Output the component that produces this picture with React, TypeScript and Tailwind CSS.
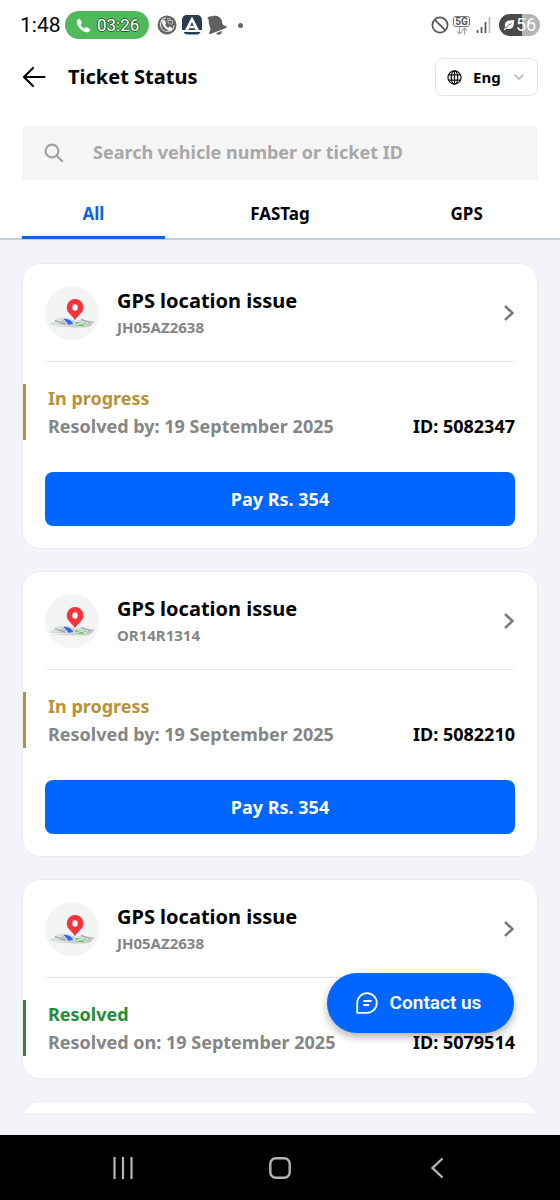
import { useState } from "react";

type Ticket = {
  id: string;
  title: string;
  vehicle: string;
  resolved: boolean;
  date: string;
  amount?: number;
};

const tickets: Ticket[] = [
  { id: "5082347", title: "GPS location issue", vehicle: "JH05AZ2638", resolved: false, date: "19 September 2025", amount: 354 },
  { id: "5082210", title: "GPS location issue", vehicle: "OR14R1314", resolved: false, date: "19 September 2025", amount: 354 },
  { id: "5079514", title: "GPS location issue", vehicle: "JH05AZ2638", resolved: true, date: "19 September 2025" },
];

const tabs = ["All", "FASTag", "GPS"];

function MapPin() {
  return (
    <svg viewBox="0 0 54 54" className="size-[54px] shrink-0" aria-hidden="true">
      <circle cx="27" cy="27" r="27" fill="#f4f4f4" />
      <path d="M6 40.500 40 42l8-3-20-1z" fill="#dcdcdc" />
      <path d="M5 38.500 13 32.500l9-.5 8 3 8-1 12 1.500-5 5-15 1-9-2.500z" fill="#c3c9cc" />
      <path d="M5 38.500 13 32.500l4 .5-2 4.500z" fill="#dfe2e3" />
      <path d="M10 34.500 20 38M36 33l9 4" stroke="#98a1a6" strokeWidth="1.200" />
      <path d="M17.500 32.500c5-.8 9.500 1.500 11.500 6l-6 .8c-1.500-3-3-4.500-5.500-6.800z" fill="#3b66dd" stroke="#eef2fa" strokeWidth=".8" />
      <path d="m29.500 35.500 13 1-3.500 4.500-9-.5z" fill="#86c283" stroke="#eaf4e8" strokeWidth=".8" />
      <path d="m31 39 6-2 3 2" fill="none" stroke="#eaf4e8" strokeWidth="1" />
      <path d="M30 34.500C28 29.500 21.700 27 21.700 21.500a8.400 8.400 0 0 1 16.800 0c0 5.500-6.500 8-8.500 13z" fill="#f5333a" />
      <ellipse cx="30" cy="21.500" rx="2.700" ry="3.200" fill="#fff" />
    </svg>
  );
}

function StatusBar() {
  return (
    <div className="flex h-[50px] shrink-0 items-center justify-between pr-5 pl-5 font-[Roboto,sans-serif]">
      <div className="flex items-center">
        <span className="w-[45px] text-[21px] leading-7 text-black">1:48</span>
        <span className="flex h-7 w-[84px] items-center gap-1.5 rounded-full bg-[#50ba5b] pl-[11px] text-white">
          <svg viewBox="0 0 24 24" className="size-[15px]" fill="currentColor" aria-hidden="true">
            <path d="M4.500 1.500C2 3 .5 5.500 2 9.500c2.500 6.500 6.500 10.500 13 13 3.500 1 6 0 7.500-3 .5-1 .2-1.700-.7-2.200l-4.600-2.600c-.9-.5-1.500-.3-2.200.5l-1.400 1.700c-3-1.300-5.200-3.500-6.500-6.500l1.700-1.400c.8-.7 1-1.300.5-2.200L6.700 2.200c-.5-.9-1.200-1.200-2.200-.7z" />
          </svg>
          <span className="text-[17px] leading-7 [text-shadow:1px_0_#285c30,-1px_0_#285c30,0_1px_#285c30,0_-1px_#285c30]">03:26</span>
        </span>
        <svg viewBox="0 0 20 20" className="ml-2 size-5" aria-hidden="true">
          <circle cx="10" cy="10" r="9.500" fill="#666" />
          <path d="M9 2.800C5 3.500 3 7 3.500 10.500c.5 3.500 3.500 6 7 6 3.500 0 6-2.500 6.500-6" fill="none" stroke="#ddd" strokeWidth="1.200" />
          <path d="M5 5.500 7.500 5l1.700 3.200-1.100 1.300c.7 1.600 1.700 2.600 3.200 3.200l1.400-1.100 2.900 1.900-.8 2.100c-1.500.8-3.400.3-5.500-1.300C6.300 11.800 4.700 9 5 5.500z" fill="#fff" />
          <path d="M10.500 5.500h5v3.500h-3.500zM10 3.500h3v2" fill="#666" stroke="#ccc" strokeWidth=".8" />
        </svg>
        <svg viewBox="0 0 20 20" className="ml-[5px] size-5" aria-hidden="true">
          <path d="M5 0h10c3.500 0 5 2.500 5 6v9H0V6c0-3.500 1.500-6 5-6zM1.500 17h17c-1 2-2.500 2.500-4 2.500h-9c-2 0-3-.8-4-2.500z" fill="#2b3b50" />
          <path d="M10 1.500 2.500 16H6l1.300-2.700h5.400L14 16h3.500zM10 7l1.800 3.800H8.200z" fill="#fff" fillRule="evenodd" />
        </svg>
        <svg viewBox="0 0 20 20" className="ml-[5px] size-5" fill="#606060" aria-hidden="true">
          <path d="M.8 2.500C2.500.7 4.700 1.500 5.200 1.200c5-1.700 9.300 1.300 9.800 5.300.4 3 1 4 4 4.500.9.200.9 1.500 0 1.900L3.500 19c-1 .4-1.800-.6-1.200-1.500 1.500-2.200 1.500-3.500.4-6.300C1.500 8 1.500 6 2 4.700 1 4.500.2 3.500.8 2.500z" />
          <path d="m9 18.200 5.500-2.100c.7 1.700-.3 3.200-1.800 3.500-1.500.3-3-.2-3.700-1.400z" />
        </svg>
        <span className="ml-[11px] size-[5px] rounded-full bg-[#666]" />
      </div>
      <div className="flex items-center">
        <svg viewBox="0 0 18 18" className="size-[18px]" fill="none" stroke="#555" strokeWidth="1.700" aria-hidden="true">
          <circle cx="9" cy="9" r="7.600" />
          <path d="m3.800 3.800 10.400 10.400" />
        </svg>
        <span className="ml-1 flex w-[17px] flex-col items-center">
          <span className="h-[11px] w-[17px] rounded-[3px] border border-[#777] text-center text-[10px] leading-[9px] font-bold text-[#555]">5G</span>
          <svg viewBox="0 0 12 8" className="h-2 w-3" fill="none" stroke="#aaa" strokeWidth="1.200" aria-hidden="true">
            <path d="M3.500 0v7M1 4.500 3.500 7 6 4.500M8.500 8V1M6 3.500 8.500 1 11 3.500" />
          </svg>
        </span>
        <svg viewBox="0 0 15 16" className="ml-1.5 h-4 w-[15px]" aria-hidden="true">
          <path d="M1.500 16v-3M5.500 16v-6M9.500 16V5" stroke="#555" strokeWidth="1.700" />
          <path d="M13.500 16V0" stroke="#bbb" strokeWidth="1.700" />
        </svg>
        <span className="ml-2 flex h-[22px] w-[41px] items-center gap-px rounded-full bg-linear-to-r from-[#4a4a4a] from-56% to-[#b4b4b4] to-56% pl-1 text-[18px] leading-[22px] text-white">
          <svg viewBox="0 0 13 12" className="h-3 w-3" aria-hidden="true">
            <path d="M12.500.5c-4 .5-10-.3-10.500 5.500 0 1.500.3 2.200.5 2.700L.8 10.800l1 .8L3.500 10c5 1.500 8.200-1 8.200-5.500 0-1.500.3-2.800.8-4z" fill="#fff" />
            <path d="M3 9.500C4.500 7 6.500 5.500 9 4.500" stroke="#4a4a4a" fill="none" />
          </svg>
          56
        </span>
      </div>
    </div>
  );
}

function TicketCard({ ticket }: { ticket: Ticket }) {
  return (
    <article className="shrink-0 rounded-[18px] border border-[#ececf0] bg-white py-[22px]">
      <div className="mx-[22px] flex items-center border-b border-[#e9e9eb] pb-[21px]">
        <MapPin />
        <div className="ml-[18px] flex-1">
          <h2 className="text-[20px] leading-7 font-bold text-black">{ticket.title}</h2>
          <p className="text-[15px] leading-6 font-bold text-[#858585]">{ticket.vehicle}</p>
        </div>
        <button type="button" aria-label="Open ticket" className="flex h-8 w-3 items-center justify-center">
          <svg viewBox="0 0 12 18" className="h-[18px] w-3" fill="none" stroke="#7b7b7b" strokeWidth="2.500" aria-hidden="true">
            <path d="m2 2 7.500 7L2 16" />
          </svg>
        </button>
      </div>
      <div
        className={`mt-[22px] border-l-3 pr-[22px] pl-[22px] text-[18px] leading-7 font-bold ${
          ticket.resolved ? "border-[#258d35]" : "border-[#ba9137]"
        }`}
      >
        <p className={ticket.resolved ? "text-[#258d35]" : "text-[#ba9137]"}>
          {ticket.resolved ? "Resolved" : "In progress"}
        </p>
        <div className="flex justify-between gap-2 whitespace-nowrap text-[#858585]">
          <span>
            {ticket.resolved ? "Resolved on:" : "Resolved by:"} {ticket.date}
          </span>
          <span className="text-black">ID: {ticket.id}</span>
        </div>
      </div>
      {ticket.amount !== undefined && (
        <div className="mt-8 px-[22px]">
          <button type="button" className="h-[54px] w-full rounded-lg bg-[#0066ff] text-[18px] font-bold text-white">
            Pay Rs. {ticket.amount}
          </button>
        </div>
      )}
    </article>
  );
}

export default function App() {
  const [active, setActive] = useState("All");
  return (
    <div className="flex h-dvh flex-col bg-[#f3f4fa] font-['Noto_Sans',sans-serif]">
      <div className="shrink-0 border-b-2 border-[#c3d0da] bg-white">
        <StatusBar />
        <header className="flex h-[54px] items-center px-[22px]">
          <button type="button" aria-label="Back" className="text-black">
            <svg viewBox="0 0 24 22" className="h-[22px] w-6" fill="none" stroke="currentColor" strokeWidth="2.200" strokeLinecap="round" strokeLinejoin="round" aria-hidden="true">
              <path d="M22.500 11H2M11 2l-9 9 9 9" />
            </svg>
          </button>
          <h1 className="ml-[22px] flex-1 text-[20px] leading-7 font-bold text-black">Ticket Status</h1>
          <label className="relative flex h-[38px] w-[103px] items-center rounded-lg border border-[#e6e6e6]">
            <svg viewBox="0 0 16 16" className="absolute left-[11px] size-[15px]" fill="none" stroke="#111" strokeWidth="1.300" aria-hidden="true">
              <circle cx="8" cy="8" r="7" />
              <ellipse cx="8" cy="8" rx="3.400" ry="7" />
              <path d="M1.700 5.300h12.600M1.700 10.700h12.600M8 1v14" />
            </svg>
            <select aria-label="Language" className="h-full w-full appearance-none bg-transparent pl-[37px] text-[15px] font-bold text-black">
              <option>Eng</option>
            </select>
            <svg viewBox="0 0 10 6" className="pointer-events-none absolute right-[13px] h-1.5 w-2.5" fill="none" stroke="#aaa" strokeWidth="1.300" aria-hidden="true">
              <path d="m.7.7 4.300 4.300L9.300.7" />
            </svg>
          </label>
        </header>
        <label className="mx-[22px] mt-[22px] flex h-[54px] items-center rounded bg-[#f5f5f5] pl-[22px]">
          <svg viewBox="0 0 20 20" className="size-5 shrink-0" fill="none" stroke="#a2a2a2" strokeWidth="2.200" aria-hidden="true">
            <circle cx="8" cy="8" r="6.400" />
            <path d="m12.700 12.700 6 6" />
          </svg>
          <input
            type="search"
            aria-label="Search tickets"
            placeholder="Search vehicle number or ticket ID"
            className="ml-[29px] h-full min-w-0 flex-1 bg-transparent pb-0.5 text-[18px] font-bold text-black outline-none placeholder:text-[#a8a8a8]"
          />
        </label>
        <div role="tablist" className="mx-[22px] mt-2 grid grid-cols-3 gap-11">
          {tabs.map((tab) => (
            <button
              key={tab}
              type="button"
              role="tab"
              aria-selected={tab === active}
              onClick={() => setActive(tab)}
              className={`-mb-px h-[51px] rounded-t-xs border-b-3 pt-1 text-[17px] font-bold ${
                tab === active ? "border-[#0b63e5] text-[#0b63e5]" : "border-transparent text-black"
              }`}
            >
              {tab}
            </button>
          ))}
        </div>
      </div>
      <main className="relative flex min-h-0 flex-1 flex-col pb-[22px]">
        <div className="flex min-h-0 flex-1 flex-col gap-[22px] overflow-y-auto px-[22px] pt-[23px] [scrollbar-width:none]">
          {tickets.map((ticket) => (
            <TicketCard key={ticket.id} ticket={ticket} />
          ))}
          <div className="h-[198px] shrink-0 rounded-[18px] border border-[#ececf0] bg-white" />
        </div>
        <button
          type="button"
          className="absolute right-[46px] bottom-[102px] flex h-[60px] w-[187px] items-center justify-center gap-3 rounded-full bg-[#0066ff] pr-1 font-[Roboto,sans-serif] text-[19px] font-semibold text-white shadow-[0_4px_8px_rgba(0,0,0,0.3)]"
        >
          <svg viewBox="0 0 22 22" className="size-[22px]" fill="none" stroke="currentColor" strokeWidth="1.800" strokeLinecap="round" strokeLinejoin="round" aria-hidden="true">
            <path d="M1.200 20.800V11a9.800 9.800 0 1 1 9.800 9.800zM8 9h7M8 13h4.500" />
          </svg>
          Contact us
        </button>
      </main>
      <nav className="flex h-[65px] shrink-0 items-center justify-around bg-black px-11 text-[#b5b5b5]">
        <button type="button" aria-label="Recent apps">
          <svg viewBox="0 0 22 22" className="size-[22px]" stroke="currentColor" strokeWidth="2.200" aria-hidden="true">
            <path d="M2.500 0v22M11 0v22M19.500 0v22" />
          </svg>
        </button>
        <button type="button" aria-label="Home">
          <svg viewBox="0 0 22 22" className="size-[22px]" fill="none" stroke="currentColor" strokeWidth="2.400" aria-hidden="true">
            <rect x="1.300" y="1.300" width="19.400" height="19.400" rx="5.500" />
          </svg>
        </button>
        <button type="button" aria-label="Go back">
          <svg viewBox="0 0 22 22" className="size-[22px]" fill="none" stroke="currentColor" strokeWidth="2.400" aria-hidden="true">
            <path d="M16.500 1.500 6.500 11l10 9.500" />
          </svg>
        </button>
      </nav>
    </div>
  );
}
